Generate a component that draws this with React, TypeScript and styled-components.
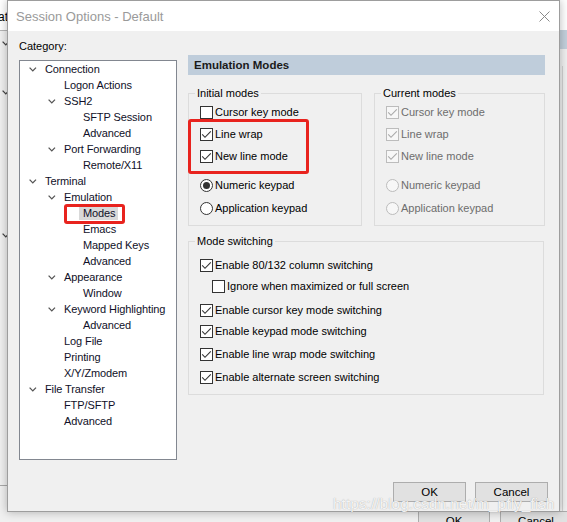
import React from "react";
import styled, { createGlobalStyle } from "styled-components";

const GlobalStyle = createGlobalStyle`
  html, body { margin: 0; padding: 0; }
  body {
    width: 567px; height: 522px; overflow: hidden; background: #f0f0f0;
    font-family: "Liberation Sans", Arial, sans-serif; font-size: 11px; color: #000;
  }
  #root { width: 567px; height: 522px; }
`;

const Desktop = styled.div`
  position: relative;
  width: 567px;
  height: 522px;
  overflow: hidden;
  background: #f0f0f0;
`;

/* ---------- background window (mostly hidden) ---------- */
const BackWindow = styled.div`
  position: absolute;
  inset: 0;
  background: #f0f0f0;
  display: flex;
  flex-direction: column;
`;
const BackTitle = styled.div`
  height: 31px;
  flex: none;
  background: #fff;
  border-bottom: 1px solid #b4b4b4;
  display: flex;
  align-items: center;
  font-size: 12px;
  padding-top: 4px;
  box-sizing: border-box;
`;
const BackTitleText = styled.span`
  margin-left: -2px;
`;
const BackBody = styled.div`
  position: relative;
  flex: 1;
`;
const BackChevron = styled.span<{ $top: number }>`
  position: absolute;
  left: 2px;
  top: ${(p) => p.$top}px;
  display: flex;
`;
const BackBand = styled.div`
  position: absolute;
  left: 190px;
  right: 0;
  top: -1px;
  height: 19px;
  background: #c3d0dc;
`;
const BackEdge = styled.div`
  position: absolute;
  left: 562px;
  top: 35px;
  bottom: 0;
  border-left: 1px solid #d2d2d2;
`;
const BackLine = styled.div`
  position: absolute;
  left: 0;
  width: 40px;
  top: 454px;
  border-top: 1px solid #a8a8a8;
`;
const BackButton = styled.div<{ $left: number }>`
  position: absolute;
  left: ${(p) => p.$left}px;
  top: 480px;
  width: 72px;
  height: 20px;
  box-sizing: border-box;
  border: 1px solid #adadad;
  background: #e1e1e1;
  display: flex;
  justify-content: center;
  padding-top: 3px;
  font-size: 11.5px;
`;

/* ---------- dialog ---------- */
const Dialog = styled.div`
  position: absolute;
  left: 7px;
  top: 0;
  width: 553px;
  height: 512px;
  box-sizing: border-box;
  border: 1px solid #9d9d9d;
  background: #f0f0f0;
  box-shadow: 0 0 9px rgba(0, 0, 0, 0.28);
  display: flex;
  flex-direction: column;
`;
const TitleBar = styled.div`
  height: 30px;
  flex: none;
  background: #fff;
  display: flex;
  align-items: center;
  justify-content: space-between;
  padding: 0 9px 0 8px;
`;
const TitleText = styled.span`
  font-size: 13px;
  color: #9a9a9a;
`;
const CloseIcon = styled.svg`
  width: 11px;
  height: 11px;
  display: block;
`;
const Body = styled.div`
  flex: 1;
  display: flex;
  flex-direction: column;
`;
const Main = styled.div`
  display: flex;
  padding-left: 11px;
  gap: 11px;
`;
const LeftCol = styled.div`
  width: 158px;
  display: flex;
  flex-direction: column;
`;
const CategoryLabel = styled.div`
  margin-top: 7px;
  height: 16px;
  line-height: 16px;
  margin-bottom: 6px;
`;
const Tree = styled.div`
  height: 400px;
  box-sizing: border-box;
  border: 1px solid #828790;
  background: #fff;
  display: flex;
  flex-direction: column;
`;
const TreeRow = styled.div<{ $level: number }>`
  position: relative;
  height: 16px;
  flex: none;
  display: flex;
  align-items: center;
  padding-left: ${(p) => p.$level * 19 + 9}px;
  color: #101028;
  letter-spacing: -0.1px;
`;
const Expander = styled.span`
  width: 16px;
  height: 16px;
  flex: none;
  display: flex;
  align-items: center;
`;
const TreeLabel = styled.span<{ $selected?: boolean }>`
  line-height: 14px;
  white-space: nowrap;
  ${(p) =>
    p.$selected
      ? `background: #d9d9d9; padding: 0 2px 0 4px; margin-left: -4px;`
      : ""}
`;
const RedMark = styled.span<{ $l: number; $t: number; $w: number; $h: number; $b: number }>`
  position: absolute;
  left: ${(p) => p.$l}px;
  top: ${(p) => p.$t}px;
  width: ${(p) => p.$w}px;
  height: ${(p) => p.$h}px;
  box-sizing: border-box;
  border: ${(p) => p.$b}px solid #e8231e;
  border-radius: 3px;
  pointer-events: none;
`;

const RightCol = styled.div`
  width: 357px;
  padding-top: 24px;
  display: flex;
  flex-direction: column;
`;
const PanelHeader = styled.div`
  height: 20px;
  width: 357px;
  background: #bfcddb;
  display: flex;
  align-items: center;
  padding-left: 6px;
  box-sizing: border-box;
  font-weight: bold;
  font-size: 11.5px;
  color: #1a1a1a;
`;
const GroupsRow = styled.div`
  display: flex;
  gap: 12px;
  margin-top: 18px;
`;
const Group = styled.div<{ $w: number; $h: number; $pt: number; $mt?: number }>`
  position: relative;
  width: ${(p) => p.$w}px;
  height: ${(p) => p.$h}px;
  margin-top: ${(p) => p.$mt ?? 0}px;
  box-sizing: border-box;
  border: 1px solid #dcdcdc;
  padding-top: ${(p) => p.$pt}px;
  display: flex;
  flex-direction: column;
`;
const Legend = styled.span`
  position: absolute;
  top: -9px;
  left: 6px;
  padding: 0 2px;
  line-height: 16px;
  background: #f0f0f0;
`;
const OptionRow = styled.label<{ $mt?: number; $indent?: number }>`
  height: 20px;
  flex: none;
  margin-top: ${(p) => p.$mt ?? 0}px;
  padding-left: ${(p) => 11 + (p.$indent ?? 0)}px;
  display: flex;
  align-items: center;
  gap: 2px;
  white-space: nowrap;
`;
const OptionText = styled.span<{ $disabled?: boolean }>`
  color: ${(p) => (p.$disabled ? "#6d6d6d" : "#000")};
`;
const RowBundle = styled.div`
  position: relative;
  display: flex;
  flex-direction: column;
  margin-top: 2px;
`;
const CheckBox = styled.span<{ $disabled?: boolean }>`
  width: 13px;
  height: 13px;
  flex: none;
  box-sizing: border-box;
  border: 1px solid ${(p) => (p.$disabled ? "#bcbcbc" : "#333")};
  background: ${(p) => (p.$disabled ? "#f7f7f7" : "#fff")};
  display: flex;
  align-items: center;
  justify-content: center;
`;
const Radio = styled.span<{ $disabled?: boolean }>`
  width: 13px;
  height: 13px;
  flex: none;
  box-sizing: border-box;
  border-radius: 50%;
  border: 1px solid ${(p) => (p.$disabled ? "#bcbcbc" : "#333")};
  background: ${(p) => (p.$disabled ? "#f7f7f7" : "#fff")};
  display: flex;
  align-items: center;
  justify-content: center;
`;
const RadioDot = styled.span`
  width: 7px;
  height: 7px;
  border-radius: 50%;
  background: #333;
`;

const Footer = styled.div`
  display: flex;
  justify-content: flex-end;
  gap: 9px;
  padding-right: 11px;
  margin-top: 22px;
`;
const Button = styled.button`
  width: 73px;
  height: 20px;
  box-sizing: border-box;
  border: 1px solid #adadad;
  background: #e1e1e1;
  font-family: inherit;
  font-size: 11.5px;
  color: #000;
  padding: 0;
`;

const Watermark = styled.div`
  position: absolute;
  left: 333px;
  top: 495px;
  font-size: 15.5px;
  line-height: 18px;
  color: rgba(255, 255, 255, 0.88);
  text-shadow: 0 0 1px rgba(100, 100, 100, 0.6);
  white-space: nowrap;
  pointer-events: none;
`;

const Chevron = ({ color = "#555" }: { color?: string }) => (
  <svg width="8" height="5" viewBox="0 0 8 5">
    <polyline points="0.6,0.6 3.8,3.9 7,0.6" fill="none" stroke={color} strokeWidth="1.3" />
  </svg>
);

const Check = ({ disabled }: { disabled?: boolean }) => (
  <svg width="11" height="11" viewBox="0 0 11 11">
    <polyline
      points="1.2,5.4 4,8.3 9.8,2.3"
      fill="none"
      stroke={disabled ? "#a9a9a9" : "#333"}
      strokeWidth="1.1"
    />
  </svg>
);

type Opt = {
  label: string;
  kind: "check" | "radio";
  on: boolean;
  mt?: number;
  indent?: number;
};

const Option = ({ o, disabled }: { o: Opt; disabled?: boolean }) => (
  <OptionRow $mt={o.mt} $indent={o.indent}>
    {o.kind === "check" ? (
      <CheckBox $disabled={disabled}>{o.on && <Check disabled={disabled} />}</CheckBox>
    ) : (
      <Radio $disabled={disabled}>{o.on && <RadioDot />}</Radio>
    )}
    <OptionText $disabled={disabled}>{o.label}</OptionText>
  </OptionRow>
);

type Node = { label: string; level: number; exp?: boolean; sel?: boolean };
const tree: Node[] = [
  { label: "Connection", level: 0, exp: true },
  { label: "Logon Actions", level: 1 },
  { label: "SSH2", level: 1, exp: true },
  { label: "SFTP Session", level: 2 },
  { label: "Advanced", level: 2 },
  { label: "Port Forwarding", level: 1, exp: true },
  { label: "Remote/X11", level: 2 },
  { label: "Terminal", level: 0, exp: true },
  { label: "Emulation", level: 1, exp: true },
  { label: "Modes", level: 2, sel: true },
  { label: "Emacs", level: 2 },
  { label: "Mapped Keys", level: 2 },
  { label: "Advanced", level: 2 },
  { label: "Appearance", level: 1, exp: true },
  { label: "Window", level: 2 },
  { label: "Keyword Highlighting", level: 1, exp: true },
  { label: "Advanced", level: 2 },
  { label: "Log File", level: 1 },
  { label: "Printing", level: 1 },
  { label: "X/Y/Zmodem", level: 1 },
  { label: "File Transfer", level: 0, exp: true },
  { label: "FTP/SFTP", level: 1 },
  { label: "Advanced", level: 1 },
];

const currentModes: Opt[] = [
  { label: "Cursor key mode", kind: "check", on: true, mt: 1 },
  { label: "Line wrap", kind: "check", on: true, mt: 2 },
  { label: "New line mode", kind: "check", on: true, mt: 2 },
  { label: "Numeric keypad", kind: "radio", on: false, mt: 9 },
  { label: "Application keypad", kind: "radio", on: false, mt: 3 },
];

const modeSwitching: Opt[] = [
  { label: "Enable 80/132 column switching", kind: "check", on: true },
  { label: "Ignore when maximized or full screen", kind: "check", on: false, mt: 1, indent: 12 },
  { label: "Enable cursor key mode switching", kind: "check", on: true, mt: 4 },
  { label: "Enable keypad mode switching", kind: "check", on: true, mt: 1 },
  { label: "Enable line wrap mode switching", kind: "check", on: true, mt: 3 },
  { label: "Enable alternate screen switching", kind: "check", on: true, mt: 3 },
];

export default function App() {
  return (
    <Desktop>
      <GlobalStyle />
      <BackWindow>
        <BackTitle>
          <BackTitleText>at</BackTitleText>
        </BackTitle>
        <BackBody>
          <BackBand />
          <BackEdge />
          <BackChevron $top={10}>
            <Chevron color="#444" />
          </BackChevron>
          <BackChevron $top={59}>
            <Chevron color="#444" />
          </BackChevron>
          <BackChevron $top={202}>
            <Chevron color="#444" />
          </BackChevron>
          <BackLine />
          <BackButton $left={418}>OK</BackButton>
          <BackButton $left={500}>Cancel</BackButton>
        </BackBody>
      </BackWindow>

      <Dialog>
        <TitleBar>
          <TitleText>Session Options - Default</TitleText>
          <CloseIcon viewBox="0 0 11 11">
            <path d="M0.5 0.5 L10.5 10.5 M10.5 0.5 L0.5 10.5" stroke="#8a8a8a" strokeWidth="1" />
          </CloseIcon>
        </TitleBar>
        <Body>
          <Main>
            <LeftCol>
              <CategoryLabel>Category:</CategoryLabel>
              <Tree>
                {tree.map((n, i) => (
                  <TreeRow key={i} $level={n.level}>
                    <Expander>{n.exp && <Chevron />}</Expander>
                    <TreeLabel $selected={n.sel}>{n.label}</TreeLabel>
                    {n.sel && <RedMark $l={44} $t={-1} $w={61} $h={20} $b={3} />}
                  </TreeRow>
                ))}
              </Tree>
            </LeftCol>
            <RightCol>
              <PanelHeader>Emulation Modes</PanelHeader>
              <GroupsRow>
                <Group $w={174} $h={133} $pt={8}>
                  <Legend>Initial modes</Legend>
                  <Option o={{ label: "Cursor key mode", kind: "check", on: false }} />
                  <RowBundle>
                    <Option o={{ label: "Line wrap", kind: "check", on: true }} />
                    <Option o={{ label: "New line mode", kind: "check", on: true, mt: 2 }} />
                    <RedMark $l={-1} $t={-5} $w={121} $h={55} $b={3} />
                  </RowBundle>
                  <Option o={{ label: "Numeric keypad", kind: "radio", on: true, mt: 9 }} />
                  <Option o={{ label: "Application keypad", kind: "radio", on: false, mt: 3 }} />
                </Group>
                <Group $w={171} $h={133} $pt={7}>
                  <Legend>Current modes</Legend>
                  {currentModes.map((o, i) => (
                    <Option key={i} o={o} disabled />
                  ))}
                </Group>
              </GroupsRow>
              <Group $w={356} $h={154} $pt={13} $mt={15}>
                <Legend>Mode switching</Legend>
                {modeSwitching.map((o, i) => (
                  <Option key={i} o={o} />
                ))}
              </Group>
            </RightCol>
          </Main>
          <Footer>
            <Button>OK</Button>
            <Button>Cancel</Button>
          </Footer>
        </Body>
      </Dialog>
      <Watermark>https://blog.csdn.net/m_pfly_fish</Watermark>
    </Desktop>
  );
}
